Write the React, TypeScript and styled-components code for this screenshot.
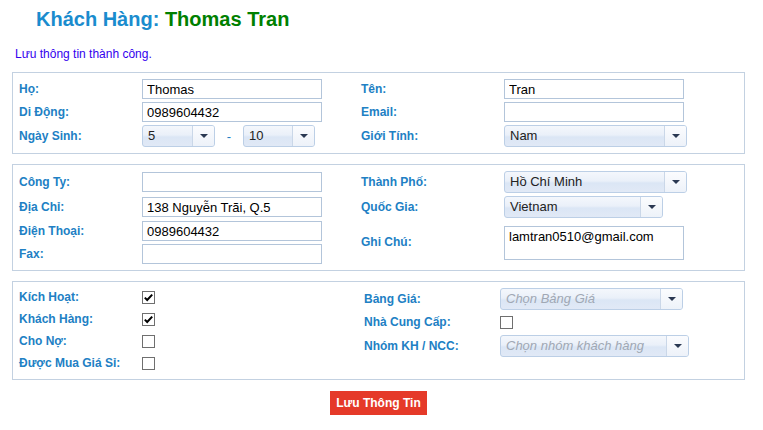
import styled, { createGlobalStyle } from "styled-components";

const GlobalStyle = createGlobalStyle`
  body {
    margin: 0;
    background: #ffffff;
    font-family: "Liberation Sans", Arial, sans-serif;
  }
`;

const palette = {
  title: "#1a8cce",
  name: "#008000",
  label: "#2180c4",
  message: "#3300ee",
  panelBorder: "#c3d1e1",
  inputBorder: "#b3c5da",
  selectBorder: "#bccfe6",
  button: "#e53a29",
};

type SelectProps = {
  value: string;
  width: number;
  placeholder?: boolean;
};

function Select({ value, width, placeholder }: SelectProps) {
  return (
    <SelectBox style={{ width }}>
      <SelectText placeholder={placeholder}>{value}</SelectText>
      <SelectArrow>
        <Triangle />
      </SelectArrow>
    </SelectBox>
  );
}

function Check({ checked }: { checked?: boolean }) {
  return (
    <CheckBox>
      {checked && (
        <svg width="11" height="11" viewBox="0 0 11 11">
          <path d="M1.8 5.6 L4.2 8 L9.2 2.6" fill="none" stroke="#000" strokeWidth="2" />
        </svg>
      )}
    </CheckBox>
  );
}

function App() {
  return (
    <Page>
      <GlobalStyle />
      <Title>
        Khách Hàng: <Name>Thomas Tran</Name>
      </Title>
      <Message>Lưu thông tin thành công.</Message>

      <Panel>
        <FormGrid>
          <Label>Họ:</Label>
          <Input defaultValue="Thomas" />
          <Label>Tên:</Label>
          <Input defaultValue="Tran" />

          <Label>Di Động:</Label>
          <Input defaultValue="0989604432" />
          <Label>Email:</Label>
          <Input defaultValue="" />

          <Label>Ngày Sinh:</Label>
          <DateRow>
            <Select value="5" width={73} />
            <Dash>-</Dash>
            <Select value="10" width={72} />
          </DateRow>
          <Label>Giới Tính:</Label>
          <Select value="Nam" width={183} />
        </FormGrid>
      </Panel>

      <Panel>
        <FormGrid>
          <Label>Công Ty:</Label>
          <Input defaultValue="" />
          <Label>Thành Phố:</Label>
          <Select value="Hồ Chí Minh" width={183} />

          <Label>Địa Chỉ:</Label>
          <Input defaultValue="138 Nguyễn Trãi, Q.5" />
          <Label>Quốc Gia:</Label>
          <Select value="Vietnam" width={159} />

          <Label>Điện Thoại:</Label>
          <Input defaultValue="0989604432" />
          <SpanLabel>Ghi Chú:</SpanLabel>
          <Note defaultValue="lamtran0510@gmail.com" />

          <Label>Fax:</Label>
          <Input defaultValue="" />
        </FormGrid>
      </Panel>

      <Panel>
        <Columns>
          <CheckGrid labelWidth={123} width={345}>
            <Label>Kích Hoạt:</Label>
            <Check checked />
            <Label>Khách Hàng:</Label>
            <Check checked />
            <Label>Cho Nợ:</Label>
            <Check />
            <Label>Được Mua Giá Sỉ:</Label>
            <Check />
          </CheckGrid>
          <CheckGrid labelWidth={136} width={340}>
            <Label>Bảng Giá:</Label>
            <Select value="Chọn Bảng Giá" width={183} placeholder />
            <Label>Nhà Cung Cấp:</Label>
            <Check />
            <Label>Nhóm KH / NCC:</Label>
            <Select value="Chọn nhóm khách hàng" width={189} placeholder />
          </CheckGrid>
        </Columns>
      </Panel>

      <Actions>
        <SaveButton>Lưu Thông Tin</SaveButton>
      </Actions>
    </Page>
  );
}

const Page = styled.div`
  width: 733px;
  padding: 0 18px 0 12px;
`;

const Title = styled.h1`
  margin: 0;
  padding: 7px 0 0 24px;
  font-size: 20px;
  line-height: 24px;
  font-weight: bold;
  color: ${palette.title};
`;

const Name = styled.span`
  color: ${palette.name};
`;

const Message = styled.p`
  margin: 16px 0 10px 3px;
  font-size: 12px;
  line-height: 15px;
  color: ${palette.message};
`;

const Panel = styled.section`
  border: 1px solid ${palette.panelBorder};
  padding: 6px;
  margin-bottom: 10px;
`;

const FormGrid = styled.div`
  display: grid;
  grid-template-columns: 123px 219px 143px 1fr;
  row-gap: 3px;
  align-items: center;
`;

const Columns = styled.div`
  display: flex;
  align-items: flex-start;
`;

const CheckGrid = styled.div<{ labelWidth: number; width: number }>`
  display: grid;
  width: ${(p) => p.width}px;
  grid-template-columns: ${(p) => p.labelWidth}px 1fr;
  row-gap: 3px;
  align-items: center;
  justify-items: start;
`;

const Label = styled.label`
  font-size: 12px;
  line-height: 15px;
  font-weight: bold;
  color: ${palette.label};
  white-space: nowrap;
`;

const SpanLabel = styled(Label)`
  grid-row: span 2;
`;

const Input = styled.input`
  box-sizing: border-box;
  width: 180px;
  height: 20px;
  margin: 0;
  padding: 0 4px;
  border: 1px solid ${palette.inputBorder};
  font-family: "Liberation Sans", Arial, sans-serif;
  font-size: 13px;
  color: #000;
  outline: none;
`;

const Note = styled.textarea`
  grid-row: span 2;
  box-sizing: border-box;
  width: 180px;
  height: 34px;
  margin: 0;
  padding: 2px 4px;
  border: 1px solid ${palette.inputBorder};
  font-family: "Liberation Sans", Arial, sans-serif;
  font-size: 13px;
  line-height: 15px;
  color: #000;
  resize: none;
  outline: none;
`;

const DateRow = styled.div`
  display: flex;
  align-items: center;
`;

const Dash = styled.span`
  width: 28px;
  text-align: center;
  font-size: 13px;
  color: ${palette.label};
`;

const SelectBox = styled.div`
  box-sizing: border-box;
  display: flex;
  height: 22px;
  border: 1px solid ${palette.selectBorder};
  border-radius: 3px;
  background: linear-gradient(
    to bottom,
    #f4f7fc 0%,
    #eaf0f9 45%,
    #dbe6f5 55%,
    #e1e9f6 100%
  );
  overflow: hidden;
`;

const SelectText = styled.span<{ placeholder?: boolean }>`
  flex: 1;
  padding-left: 5px;
  font-size: 13px;
  line-height: 20px;
  white-space: nowrap;
  overflow: hidden;
  color: ${(p) => (p.placeholder ? "#a0a8b4" : "#222")};
  font-style: ${(p) => (p.placeholder ? "italic" : "normal")};
`;

const SelectArrow = styled.span`
  display: flex;
  align-items: center;
  justify-content: center;
  width: 21px;
  border-left: 1px solid #cad7e8;
  background: linear-gradient(to bottom, #fbfcfe, #edf2f9);
`;

const Triangle = styled.span`
  width: 0;
  height: 0;
  border-left: 4px solid transparent;
  border-right: 4px solid transparent;
  border-top: 4px solid #2a3852;
`;

const CheckBox = styled.span`
  box-sizing: border-box;
  display: flex;
  align-items: center;
  justify-content: center;
  width: 13px;
  height: 13px;
  margin: 3px 0;
  border: 1px solid #6f6f6f;
  background: #fff;
`;

const Actions = styled.div`
  display: flex;
  justify-content: center;
  padding-top: 1px;
`;

const SaveButton = styled.button`
  height: 24px;
  padding: 0 6px;
  border: none;
  background: ${palette.button};
  color: #fff;
  font-family: "Liberation Sans", Arial, sans-serif;
  font-size: 12px;
  font-weight: bold;
  cursor: pointer;
`;

export default App;
